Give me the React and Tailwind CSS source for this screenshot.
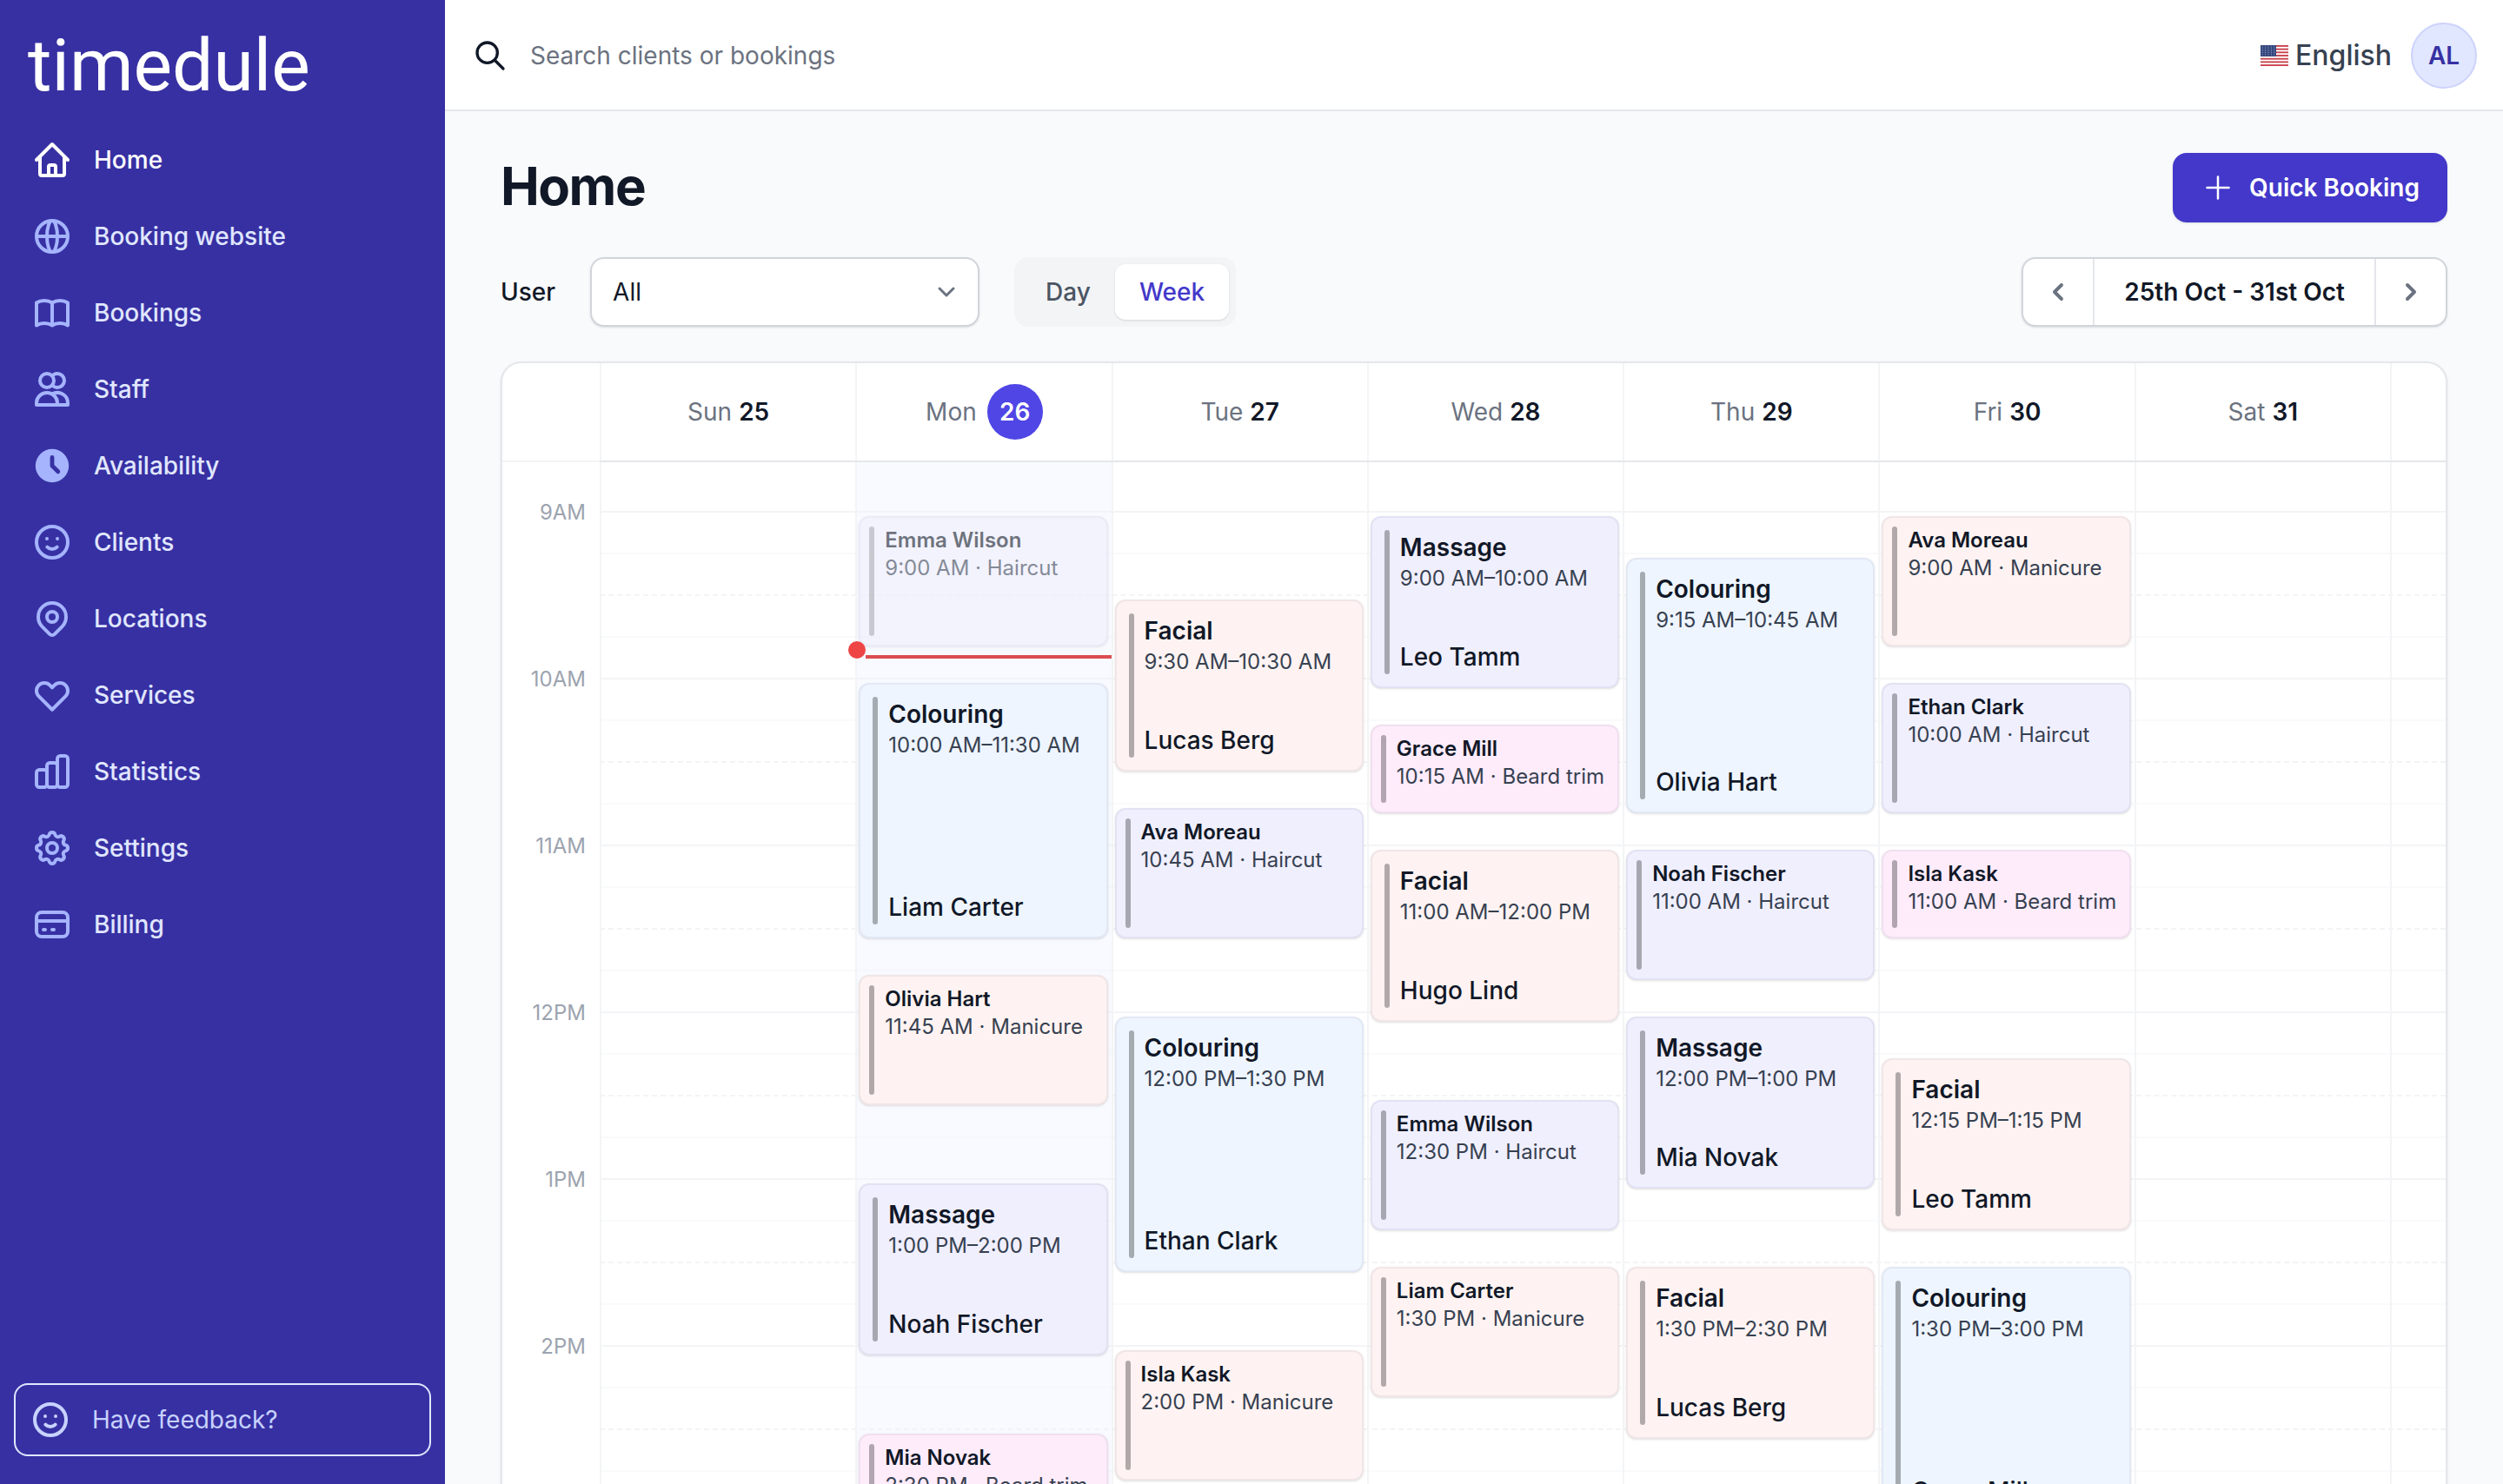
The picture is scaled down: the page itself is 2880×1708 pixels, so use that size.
import { useState } from 'react';
import {
	HiChevronLeft,
	HiChevronRight,
	HiClock,
	HiOutlineBookOpen,
	HiOutlineCog,
	HiOutlineCreditCard,
	HiOutlineEmojiHappy,
	HiOutlineGlobeAlt,
	HiOutlineHeart,
	HiOutlineHome,
	HiOutlineLocationMarker,
	HiOutlineSearch,
	HiOutlineUsers,
} from 'react-icons/hi';

const FIRST_HOUR = 9;
const SLOT_COUNT = 28;

const BarsIcon = ({ className }) => (
	<svg className={className} viewBox="0 0 24 24" fill="none" stroke="currentColor" strokeWidth="2" aria-hidden="true">
		<rect x="3" y="11" width="6" height="10" rx="1.6" />
		<rect x="9" y="7" width="6" height="14" rx="1.6" />
		<rect x="15" y="3" width="6" height="18" rx="1.6" />
	</svg>
);

const navigation = [
	{ name: 'Home', icon: HiOutlineHome, current: true },
	{ name: 'Booking website', icon: HiOutlineGlobeAlt },
	{ name: 'Bookings', icon: HiOutlineBookOpen },
	{ name: 'Staff', icon: HiOutlineUsers },
	{ name: 'Availability', icon: HiClock },
	{ name: 'Clients', icon: HiOutlineEmojiHappy },
	{ name: 'Locations', icon: HiOutlineLocationMarker },
	{ name: 'Services', icon: HiOutlineHeart },
	{ name: 'Statistics', icon: BarsIcon },
	{ name: 'Settings', icon: HiOutlineCog },
	{ name: 'Billing', icon: HiOutlineCreditCard },
];

const serviceColors = {
	Haircut: 'bg-[#f0effe]',
	Massage: 'bg-[#f0effe]',
	Colouring: 'bg-[#eef5ff]',
	Manicure: 'bg-[#fef3f2]',
	Facial: 'bg-[#fef3f2]',
	'Beard trim': 'bg-[#feecfb]',
};

const days = [
	{ name: 'Sun', date: 25, bookings: [] },
	{
		name: 'Mon',
		date: 26,
		today: true,
		bookings: [
			{ start: 9, minutes: 45, service: 'Haircut', client: 'Emma Wilson', past: true },
			{ start: 10, minutes: 90, service: 'Colouring', client: 'Liam Carter' },
			{ start: 11.75, minutes: 45, service: 'Manicure', client: 'Olivia Hart' },
			{ start: 13, minutes: 60, service: 'Massage', client: 'Noah Fischer' },
			{ start: 14.5, minutes: 30, service: 'Beard trim', client: 'Mia Novak' },
		],
	},
	{
		name: 'Tue',
		date: 27,
		bookings: [
			{ start: 9.5, minutes: 60, service: 'Facial', client: 'Lucas Berg' },
			{ start: 10.75, minutes: 45, service: 'Haircut', client: 'Ava Moreau' },
			{ start: 12, minutes: 90, service: 'Colouring', client: 'Ethan Clark' },
			{ start: 14, minutes: 45, service: 'Manicure', client: 'Isla Kask' },
		],
	},
	{
		name: 'Wed',
		date: 28,
		bookings: [
			{ start: 9, minutes: 60, service: 'Massage', client: 'Leo Tamm' },
			{ start: 10.25, minutes: 30, service: 'Beard trim', client: 'Grace Mill' },
			{ start: 11, minutes: 60, service: 'Facial', client: 'Hugo Lind' },
			{ start: 12.5, minutes: 45, service: 'Haircut', client: 'Emma Wilson' },
			{ start: 13.5, minutes: 45, service: 'Manicure', client: 'Liam Carter' },
		],
	},
	{
		name: 'Thu',
		date: 29,
		bookings: [
			{ start: 9.25, minutes: 90, service: 'Colouring', client: 'Olivia Hart' },
			{ start: 11, minutes: 45, service: 'Haircut', client: 'Noah Fischer' },
			{ start: 12, minutes: 60, service: 'Massage', client: 'Mia Novak' },
			{ start: 13.5, minutes: 60, service: 'Facial', client: 'Lucas Berg' },
		],
	},
	{
		name: 'Fri',
		date: 30,
		bookings: [
			{ start: 9, minutes: 45, service: 'Manicure', client: 'Ava Moreau' },
			{ start: 10, minutes: 45, service: 'Haircut', client: 'Ethan Clark' },
			{ start: 11, minutes: 30, service: 'Beard trim', client: 'Isla Kask' },
			{ start: 12.25, minutes: 60, service: 'Facial', client: 'Leo Tamm' },
			{ start: 13.5, minutes: 90, service: 'Colouring', client: 'Grace Mill' },
		],
	},
	{ name: 'Sat', date: 31, bookings: [] },
];

const formatTime = (time) => {
	const hour = Math.floor(time);
	const minutes = String(Math.round((time - hour) * 60)).padStart(2, '0');
	return `${hour > 12 ? hour - 12 : hour}:${minutes} ${hour < 12 ? 'AM' : 'PM'}`;
};

const formatHour = (hour) => `${hour > 12 ? hour - 12 : hour}${hour < 12 ? 'AM' : 'PM'}`;

const Sidebar = () => {
	return (
		<aside className="flex w-128 shrink-0 flex-col bg-[#3730a3] px-4 pb-8">
			<a href="#" className="px-4 pt-6 font-['Roboto',sans-serif] text-[84px] leading-[104px] text-white">
				timedule
			</a>
			<nav className="mt-4 flex flex-col gap-2">
				{navigation.map((item) => (
					<a
						key={item.name}
						href="#"
						className={`flex h-20 items-center gap-6 px-5 text-[28px] font-medium ${
							item.current ? 'text-white' : 'text-indigo-100'
						}`}
					>
						<item.icon className={`size-12 shrink-0 ${item.current ? 'text-white' : 'text-[#a5b4fc]'}`} />
						{item.name}
					</a>
				))}
			</nav>
			<button className="mt-auto flex h-[84px] items-center gap-6 rounded-2xl border-2 border-indigo-100 px-4 text-[28px] text-[#c7d2fe]">
				<HiOutlineEmojiHappy className="size-12" />
				Have feedback?
			</button>
		</aside>
	);
};

const Flag = () => (
	<svg className="h-6 w-8" viewBox="0 0 32 24" aria-hidden="true">
		<rect width="32" height="24" fill="#fff" />
		{[0, 1, 2, 3, 4, 5, 6].map((i) => (
			<rect key={i} y={(i * 48) / 13} width="32" height={24 / 13} fill="#c8414b" />
		))}
		<rect width="18" height={(24 * 7) / 13} fill="#34477f" />
		{[0, 1, 2, 3, 4].map((row) =>
			[0, 1, 2, 3, 4].map((col) => (
				<circle key={`${row}-${col}`} cx={2.2 + col * 3.4} cy={2 + row * 2.2} r="0.5" fill="#b9c2da" />
			))
		)}
	</svg>
);

const Topbar = () => {
	return (
		<header className="flex h-32 shrink-0 items-center border-b-2 border-[#e5e7eb] bg-white pt-0.5 pr-[30px] pl-8">
			<label htmlFor="search" className="mr-[26px]">
				<HiOutlineSearch className="size-10 text-gray-900" />
			</label>
			<input
				id="search"
				type="search"
				aria-label="Search clients or bookings"
				placeholder="Search clients or bookings"
				className="h-full min-w-0 flex-1 text-[28px] text-gray-900 outline-none placeholder:text-[#6b7280]"
			/>
			<button className="flex items-center gap-2 text-[32px] font-medium text-[#374151]">
				<Flag />
				English
			</button>
			<button className="ml-[22px] flex size-[76px] items-center justify-center rounded-full border-2 border-[#cdd3fb] bg-[#e0e7ff] text-[28px] font-semibold text-[#3730a3]">
				AL
			</button>
		</header>
	);
};

const Toolbar = ({ view, onViewChange }) => {
	return (
		<div className="mt-10 flex h-20 shrink-0 items-center">
			<label htmlFor="user" className="mr-10 text-[28px] font-medium text-[#111827]">
				User
			</label>
			<div className="relative h-full w-112">
				<select
					id="user"
					className="h-full w-full appearance-none rounded-2xl border-2 border-[#d1d5db] bg-white px-6 text-[28px] text-[#111827] shadow-sm"
				>
					<option>All</option>
				</select>
				<svg
					className="pointer-events-none absolute top-5 right-[18px] size-10 text-[#6b7280]"
					viewBox="0 0 20 20"
					fill="none"
					stroke="currentColor"
					strokeWidth="1.5"
					strokeLinecap="round"
					strokeLinejoin="round"
					aria-hidden="true"
				>
					<path d="M6 8l4 4 4-4" />
				</svg>
			</div>
			<div className="ml-10 flex h-full rounded-2xl bg-[#f3f4f6] p-2">
				{['Day', 'Week'].map((option) => (
					<button
						key={option}
						onClick={() => onViewChange(option)}
						className={`rounded-xl px-7 text-[28px] font-medium ${
							view === option ? 'bg-white text-[#4338ca] shadow-sm' : 'text-[#4b5563]'
						}`}
					>
						{option}
					</button>
				))}
			</div>
			<div className="ml-auto flex h-full divide-x-2 divide-gray-200 rounded-2xl border-2 border-[#d1d5db] bg-white shadow-sm">
				<button aria-label="Previous week" className="px-5 text-[#6b7280]">
					<HiChevronLeft className="size-10" />
				</button>
				<button className="px-[34px] text-[28px] font-semibold text-[#111827]">25th Oct - 31st Oct</button>
				<button aria-label="Next week" className="px-5 text-[#6b7280]">
					<HiChevronRight className="size-10" />
				</button>
			</div>
		</div>
	);
};

const Booking = ({ booking }) => {
	const { start, minutes, service, client, past } = booking;
	const long = minutes >= 60;
	const row = (start - FIRST_HOUR) * 4 + 1;

	return (
		<a
			href="#"
			style={{ gridRow: `${row} / span ${minutes / 15}` }}
			className={`mx-1 mt-[6px] mb-[-12px] flex min-w-0 gap-3 rounded-xl border-2 border-[#1e1b4b]/6 shadow-sm ${
				long ? 'p-[14px]' : 'p-[10px]'
			} ${past ? 'opacity-60' : ''} ${serviceColors[service]}`}
		>
			<span className="w-[6px] shrink-0 rounded-full bg-black/30" />
			{long ? (
				<span className="flex min-w-0 flex-col whitespace-nowrap text-[#111827]">
					<span className="text-[28px] leading-10 font-semibold">{service}</span>
					<span className="text-[24px] leading-8 text-[#374151]">
						{formatTime(start)}–{formatTime(start + minutes / 60)}
					</span>
					<span className="mt-auto text-[28px] leading-10 font-medium">{client}</span>
				</span>
			) : (
				<span className="flex min-w-0 flex-col text-[24px] leading-8 whitespace-nowrap">
					<span className="font-semibold text-[#111827]">{client}</span>
					<span className="text-[#374151]">
						{formatTime(start)} · {service}
					</span>
				</span>
			)}
		</a>
	);
};

const lineStyles = [
	'border-solid border-[#f3f4f6]',
	'border-solid border-[#f9fafb]',
	'border-dashed border-[#f3f4f6]',
	'border-solid border-[#f9fafb]',
];

const Calendar = () => {
	const slots = Array.from({ length: SLOT_COUNT }, (_, i) => i);

	return (
		<section className="mt-10 shrink-0 overflow-hidden rounded-3xl border-2 border-[#e5e7eb] bg-white shadow-sm">
			<div className="flex h-[114px]">
				<div className="w-28 shrink-0 border-b-2 border-[#f3f4f6]" />
				<div className="grid flex-1 grid-cols-[repeat(7,minmax(0,1fr))_64px] border-b-2 border-[#e5e7eb]">
					{days.map((day) => (
						<div
							key={day.name}
							className={`flex items-center justify-center border-l-2 border-[#f3f4f6] text-[28px] text-[#6b7280] ${
								day.today ? 'gap-3' : 'gap-2'
							}`}
						>
							{day.name}
							<span
								className={
									day.today
										? 'flex size-16 items-center justify-center rounded-full bg-[#4f46e5] font-semibold text-white'
										: 'font-semibold text-[#111827]'
								}
							>
								{day.date}
							</span>
						</div>
					))}
					<div className="border-l-2 border-[#f3f4f6]" />
				</div>
			</div>
			<div className="flex">
				<div className="grid w-28 shrink-0 auto-rows-[192px] pt-10 pr-4 text-right text-[24px] leading-9 text-[#9ca3af]">
					{slots
						.filter((slot) => slot % 4 === 0)
						.map((slot) => (
							<div key={slot}>{formatHour(FIRST_HOUR + slot / 4)}</div>
						))}
				</div>
				<div className="grid flex-1">
					<div className="grid auto-rows-[48px] pt-14 [grid-area:1/1]">
						{slots.map((slot) => (
							<div key={slot} className={`border-t-2 ${lineStyles[slot % 4]}`} />
						))}
					</div>
					<div className="grid grid-cols-[repeat(7,minmax(0,1fr))_64px] [grid-area:1/1]">
						{days.map((day) => (
							<div
								key={day.name}
								className={`relative shadow-[inset_2px_0_#f3f4f6] ${day.today ? 'bg-[#eef2ff]/40' : ''}`}
							>
								<div className="grid auto-rows-[48px] grid-cols-1 pt-14">
									{day.bookings.map((booking) => (
										<Booking key={booking.start} booking={booking} />
									))}
								</div>
								{day.today && (
									<>
										<span className="absolute top-[206px] -left-2 size-5 rounded-full bg-[#ef4444]" />
										<span className="absolute top-[222px] right-0 left-3 h-1 bg-[#dc4c50]" />
									</>
								)}
							</div>
						))}
						<div className="border-l-2 border-[#f3f4f6]" />
					</div>
				</div>
			</div>
		</section>
	);
};

const App = () => {
	const [view, setView] = useState('Week');

	return (
		<div className="flex h-screen overflow-hidden bg-[#f9fafc] font-['Inter',sans-serif]">
			<Sidebar />
			<div className="flex min-w-0 flex-1 flex-col">
				<Topbar />
				<main className="flex min-h-0 flex-1 flex-col overflow-hidden px-16 pt-12">
					<div className="flex shrink-0 items-start justify-between">
						<h1 className="text-[60px] leading-[76px] font-bold tracking-tight text-[#111827]">Home</h1>
						<button className="flex h-20 items-center gap-4 rounded-2xl bg-[#4338ca] px-8 text-[28px] font-semibold text-white shadow-sm">
							<svg
								className="size-10"
								viewBox="0 0 40 40"
								stroke="currentColor"
								strokeWidth="2.5"
								strokeLinecap="round"
								aria-hidden="true"
							>
								<path d="M20 7.5v25M7.5 20h25" />
							</svg>
							Quick Booking
						</button>
					</div>
					<Toolbar view={view} onViewChange={setView} />
					<Calendar />
				</main>
			</div>
		</div>
	);
};

export default App;
